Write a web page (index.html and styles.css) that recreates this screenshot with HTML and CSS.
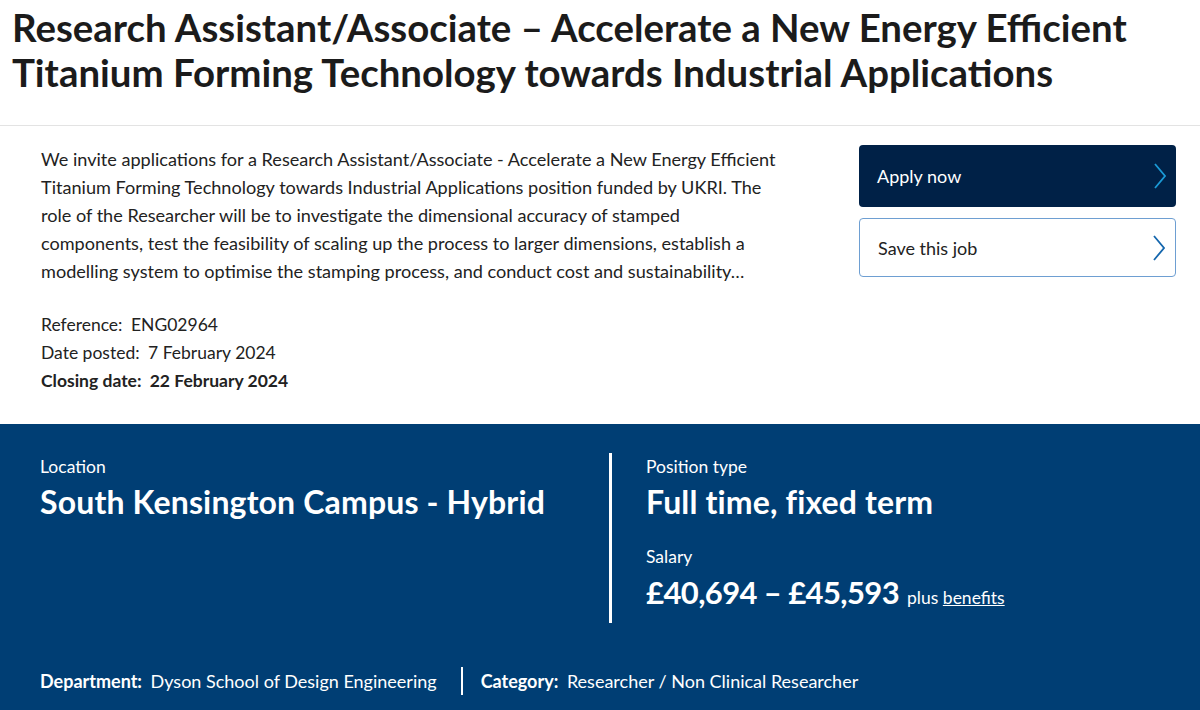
FILE: index.html
```html
<!DOCTYPE html>
<html lang="en">
<head>
<meta charset="utf-8">
<title>Research Assistant/Associate – Accelerate a New Energy Efficient Titanium Forming Technology</title>
<link rel="stylesheet" href="styles.css">
</head>
<body>
<header class="page-title">
  <h1>Research Assistant/Associate – Accelerate a New Energy Efficient Titanium Forming Technology towards Industrial Applications</h1>
</header>

<section class="intro">
  <div class="summary">
    <p class="desc">We invite applications for a Research Assistant/Associate - Accelerate a New Energy Efficient Titanium Forming Technology towards Industrial Applications position funded by UKRI. The role of the Researcher will be to investigate the dimensional accuracy of stamped components, test the feasibility of scaling up the process to larger dimensions, establish a modelling system to optimise the stamping process, and conduct cost and sustainability…</p>
    <ul class="meta">
      <li><span class="meta-label">Reference:</span> ENG02964</li>
      <li><span class="meta-label">Date posted:</span> 7 February 2024</li>
      <li class="meta-strong"><span class="meta-label">Closing date:</span> 22 February 2024</li>
    </ul>
  </div>
  <div class="actions">
    <a class="btn btn-primary" href="#">Apply now
      <svg class="chev" viewBox="0 0 12 26" width="12" height="26"><path d="M1 1 L11 13 L1 25" fill="none" stroke="currentColor" stroke-width="1.8"/></svg>
    </a>
    <a class="btn btn-secondary" href="#">Save this job
      <svg class="chev" viewBox="0 0 12 26" width="12" height="26"><path d="M1 1 L11 13 L1 25" fill="none" stroke="currentColor" stroke-width="1.8"/></svg>
    </a>
  </div>
</section>

<section class="facts">
  <div class="facts-grid">
    <div class="fact-col">
      <div class="fact-label">Location</div>
      <div class="fact-value">South Kensington Campus - Hybrid</div>
    </div>
    <div class="fact-col fact-col-right">
      <div class="fact-label">Position type</div>
      <div class="fact-value">Full time, fixed term</div>
      <div class="fact-label fact-label-spaced">Salary</div>
      <div class="fact-value fact-salary"><span class="amount">£40,694 – £45,593</span> <span class="plus">plus <a href="#">benefits</a></span></div>
    </div>
  </div>
  <div class="facts-footer">
    <div class="foot-item"><span class="foot-label">Department:</span> Dyson School of Design Engineering</div>
    <span class="foot-sep"></span>
    <div class="foot-item"><span class="foot-label">Category:</span> Researcher / Non Clinical Researcher</div>
  </div>
</section>
</body>
</html>
```

FILE: styles.css
```css
html, body {
  margin: 0;
  padding: 0;
}
html {
  overflow: hidden;
}
body {
  width: 1200px;
  height: 710px;
  background: #ffffff;
  font-family: Lato, "Open Sans", sans-serif;
  color: #222222;
}

.page-title {
  padding: 5px 12px 30px;
  border-bottom: 1px solid #e3e3e3;
}
.page-title h1 {
  margin: 0;
  font-size: 38.4px;
  line-height: 45px;
  font-weight: 700;
  color: #1b1b1b;
}

.intro {
  display: flex;
  justify-content: space-between;
  padding: 19px 24px 29px 41px;
}
.summary {
  width: 745px;
}
.desc {
  margin: 0;
  font-size: 18.1px;
  line-height: 28px;
}
.meta {
  list-style: none;
  margin: 26px 0 0;
  padding: 0;
  font-size: 17.5px;
  line-height: 28px;
}
.meta-label {
  margin-right: 4px;
}
.meta-strong {
  font-weight: 700;
}

.actions {
  width: 317px;
  display: flex;
  flex-direction: column;
  gap: 11px;
}
.btn {
  display: flex;
  align-items: center;
  justify-content: space-between;
  box-sizing: border-box;
  border-radius: 4px;
  text-decoration: none;
  font-size: 18px;
  padding: 0 10px 0 18px;
}
.btn-primary {
  height: 62px;
  background: #002147;
  color: #ffffff;
}
.btn-primary .chev {
  color: #1a9ad6;
}
.btn-secondary {
  height: 59px;
  background: #ffffff;
  border: 1px solid #6e9fd2;
  color: #222222;
}
.btn-secondary .chev {
  color: #1466ad;
}

.facts {
  background: #003e74;
  color: #ffffff;
  padding: 29px 40px 15px;
}
.facts-grid {
  display: grid;
  grid-template-columns: 569px 1fr;
}
.fact-col {
  padding-top: 2px;
}
.fact-col-right {
  border-left: 3px solid #ffffff;
  padding: 2px 0 6px 34px;
}
.fact-label {
  font-size: 17.5px;
  line-height: 24px;
}
.fact-label-spaced {
  margin-top: 24px;
}
.fact-value {
  margin-top: 4px;
  font-size: 32px;
  line-height: 38px;
  font-weight: 700;
  letter-spacing: 0.15px;
}
.amount {
  font-size: 31px;
  letter-spacing: -0.6px;
}
.plus {
  font-size: 17.5px;
  font-weight: 400;
  letter-spacing: 0;
}
.plus a {
  color: #ffffff;
}

.facts-footer {
  display: flex;
  align-items: center;
  margin-top: 44px;
  font-size: 18px;
  line-height: 28px;
}
.foot-label {
  font-weight: 700;
  margin-right: 4px;
}
.foot-sep {
  width: 2px;
  height: 28px;
  background: #ffffff;
  margin: 0 18px 0 24px;
}
```
